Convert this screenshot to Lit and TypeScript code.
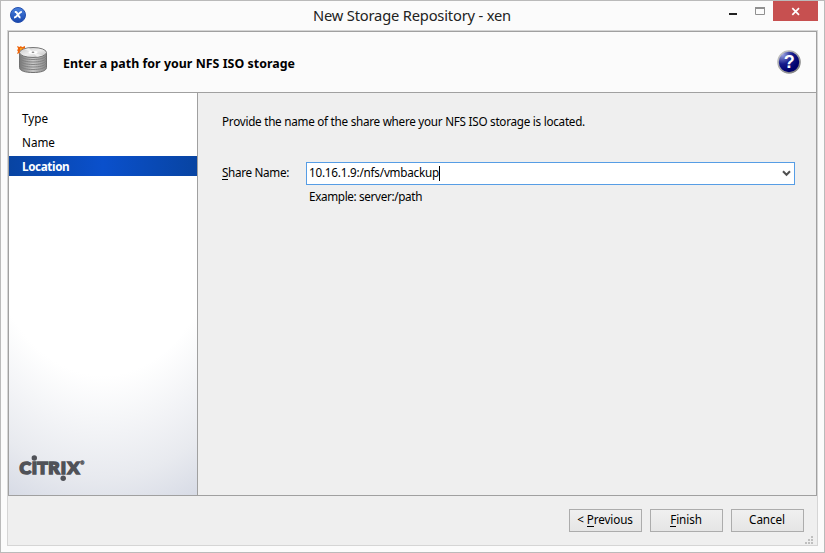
import { LitElement, html, css, svg } from "lit";
import { customElement, property } from "lit/decorators.js";

@customElement("disk-icon")
class DiskIcon extends LitElement {
  static styles = css`:host { display: block; width: 32px; height: 32px; } svg { display: block; }`;
  render() {
    const rings = [11.5, 14, 16.5, 19, 21.5];
    return html`<svg width="32" height="32" viewBox="0 0 32 32">
      <defs>
        <linearGradient id="side"><stop offset="0" stop-color="#777"/><stop offset=".3" stop-color="#aaa"/><stop offset=".5" stop-color="#c9c9c9"/><stop offset="1" stop-color="#888"/></linearGradient>
        <linearGradient id="top" x1="0" y1="0" x2="1" y2="1"><stop offset="0" stop-color="#c4c4c4"/><stop offset=".5" stop-color="#eee"/><stop offset="1" stop-color="#bbb"/></linearGradient>
      </defs>
      <path d="M2.5 7v14.5c0 3.5 6 5 13.5 5s13.5-1.5 13.5-5V7z" fill="url(#side)" stroke="#707070"/>
      ${rings.map((y) => svg`<path d=${`M3 ${y - 2}c1 3 7 4 13 4s12-1 13-4`} fill="none" stroke="#7d7d7d" stroke-width=".9"/>`)}
      <ellipse cx="16" cy="6.5" rx="13.5" ry="5" fill="url(#top)" stroke="#777"/>
      <path d="M16 6.5l-9-3.3 5-1.2zM16 6.5l10 3-6 1.5z" fill="#fff" opacity=".6"/>
      <ellipse cx="16" cy="6.3" rx="4.5" ry="1.5" fill="#fff"/>
      <ellipse cx="16" cy="6.3" rx="1.4" ry=".7" fill="#888"/>
      <path d="M0 0l2.5 1L4 0l1 1.2L8 0v2L6 3 3 4.5 2.5 7 0 8l1-2.5L0 4l1.2-1z" fill="#ee6408"/>
      <path d="M3 2h3L3 4.5z" fill="#f4a51c"/>
    </svg>`;
  }
}

@customElement("citrix-logo")
class CitrixLogo extends LitElement {
  static styles = css`
    :host { display: block; width: 68px; height: 28px; }
    svg { display: block; }
    text { font-family: Lato, sans-serif; font-weight: 900; font-size: 17.5px; fill: #505258; stroke: #505258; stroke-width: 1.6px; }
    .reg { font-size: 5px; stroke-width: 0.3px; }`;
  render() {
    return html`<svg width="68" height="28" viewBox="0 0 68 28">
      <text y="19.2" x="1.4 13.8 19.3 30.3 42.7 49.4">CITRIX</text>
      <text class="reg" x="62.3" y="9.7">®</text>
      <circle cx="16.3" cy="3" r="2.7" fill="#505258"/>
      <circle cx="45.2" cy="23.2" r="2.7" fill="#505258"/>
    </svg>`;
  }
}

@customElement("title-bar")
class TitleBar extends LitElement {
  @property() heading = "";
  static styles = css`
    :host { display: grid; grid-template-columns: 38px 1fr 102px; height: 29px; align-items: start; }
    svg { display: block; }
    .app { margin: 6px 0 0 9px; }
    .heading { text-align: center; font-size: 14.7px; line-height: 29px; color: #222; padding-left: 63px; white-space: nowrap; letter-spacing: -0.18px; }
    .controls { display: flex; }
    .close { width: 45px; height: 20px; background: #c75050; }`;
  render() {
    return html`
      <svg class="app" width="16" height="16" viewBox="0 0 16 16">
        <defs><linearGradient id="b" x2="0" y2="1"><stop offset="0" stop-color="#4b83df"/><stop offset="1" stop-color="#1745ac"/></linearGradient></defs>
        <circle cx="8" cy="8" r="7.5" fill="url(#b)" stroke="#244fae"/>
        <path d="M4.8 5h1.4c1 0 2.2 5.6 4.3 5.6M11.8 5h-.7C9.5 5 6.5 10.6 4 10.6" fill="none" stroke="#fff" stroke-width="2"/>
      </svg>
      <div class="heading">${this.heading}</div>
      <div class="controls">
        <svg width="51" height="20" viewBox="0 0 51 20">
          <path d="M7 12h8v2H7z" fill="#222"/>
          <path d="M33.5 7.5h9v6h-9z" fill="none" stroke="#909090"/><path d="M33 6h10v2H33z" fill="#909090"/>
        </svg>
        <div class="close"><svg width="45" height="20" viewBox="0 0 45 20"><path d="M19.3 7.2l6.7 6.6M26 7.2l-6.7 6.6" stroke="#fff" stroke-width="1.7"/></svg></div>
      </div>`;
  }
}

@customElement("app-root")
class AppRoot extends LitElement {
  static styles = css`
    :host { display: block; width: 825px; height: 553px; font-family: "Noto Sans", sans-serif; font-size: 11.7px; letter-spacing: -0.26px; color: #000; }
    * { box-sizing: border-box; }
    svg { display: block; }
    .window { display: flex; flex-direction: column; height: 100%; border: 1px solid #bababa; background: #fbfbfb; }
    .client { width: 811px; height: 516px; margin-left: 6px; border: 1px solid #d5d5d5; background: #efefef; display: flex; flex-direction: column; }
    .main { height: 465px; border: 1px solid #a0a0a0; display: flex; flex-direction: column; }
    .header { height: 61px; flex: none; display: flex; align-items: center; border-bottom: 1px solid #a0a0a0; background: #fbfbfb; padding: 0 15px 0 8px; }
    .header h1 { margin: 3px 0 0 14px; flex: 1; font-size: 12.4px; line-height: 18px; font-weight: 700; white-space: nowrap; letter-spacing: 0.03px; }
    .body { flex: 1; display: flex; }
    .side { width: 189px; border-right: 1px solid #a0a0a0; display: flex; flex-direction: column; justify-content: space-between;
      background: radial-gradient(ellipse 225px 325px at 94px 107px, #fff 54%, #e8eaef 85%, #d6dae5 101%); }
    .steps { margin: 15px 0 0; padding: 0; list-style: none; display: flex; flex-direction: column; gap: 4px; letter-spacing: 0; }
    .steps li { height: 20px; line-height: 21px; padding-left: 13px; }
    .steps .active { color: #fff; font-weight: 700; letter-spacing: -0.38px; background: linear-gradient(90deg, #0844a2, #0a50cc 50%, #0844a2); }
    citrix-logo { margin: 0 0 12px 9px; }
    .form { flex: 1; padding: 19px 21px 0 24px; white-space: nowrap; }
    .intro { line-height: 18px; }
    .row { display: flex; align-items: center; margin-top: 32px; }
    .label { width: 84px; margin-top: -3px; letter-spacing: -0.32px; }
    .combo { width: 489px; height: 23px; border: 1px solid #569de5; background: #fff; display: flex; align-items: center; padding-left: 2px; }
    .value { margin-top: -3px; letter-spacing: -0.22px; }
    .caret { width: 1px; height: 15px; background: #000; margin-top: -1px; }
    .arrow { margin-left: auto; margin-right: 3px; }
    .hint { margin: 2px 0 0 87px; line-height: 18px; letter-spacing: -0.34px; }
    u { text-decoration: none; border-bottom: 1px solid currentColor; display: inline-block; line-height: 13px; }
    .footer { flex: 1; display: flex; padding: 13px 1px 1px 561px; gap: 8px; }
    button { flex: none; width: 73px; height: 23px; padding: 0 1px 2px 0; border: 1px solid #acacac; background: linear-gradient(#f0f0f0, #e5e5e5); font: inherit; letter-spacing: -0.1px; color: #000; line-height: 19px; white-space: nowrap; }
    .grip { margin: auto 0 0 -7px; }
    .q { font: 700 18px "Liberation Sans", sans-serif; fill: #fff; }
  `;
  steps = ["Type", "Name", "Location"];
  render() {
    return html`<div class="window">
      <title-bar heading="New Storage Repository - xen"></title-bar>
      <div class="client">
        <div class="main">
          <div class="header">
            <disk-icon></disk-icon>
            <h1>Enter a path for your NFS ISO storage</h1>
            <svg width="24" height="24" viewBox="0 0 24 24">
              <defs>
                <radialGradient id="h" cx=".2" cy=".15" r=".8"><stop offset="0" stop-color="#a0a8e4"/><stop offset=".55" stop-color="#161c8c"/><stop offset="1" stop-color="#00006c"/></radialGradient>
                <linearGradient id="r" x2="1" y2="1"><stop offset="0" stop-color="#ccc"/><stop offset="1" stop-color="#777"/></linearGradient>
              </defs>
              <circle cx="12" cy="12" r="11" fill="url(#h)" stroke="url(#r)" stroke-width="1.6"/>
              <text class="q" x="12" y="18.2" text-anchor="middle">?</text>
            </svg>
          </div>
          <div class="body">
            <div class="side">
              <ul class="steps">${this.steps.map((s) => html`<li class=${s === "Location" ? "active" : ""}>${s}</li>`)}</ul>
              <citrix-logo></citrix-logo>
            </div>
            <div class="form">
              <div class="intro">Provide the name of the share where your NFS ISO storage is located.</div>
              <div class="row">
                <div class="label"><u>S</u>hare Name:</div>
                <div class="combo"><span class="value">10.16.1.9:/nfs/vmbackup</span><span class="caret"></span>
                  <svg class="arrow" width="9" height="7" viewBox="0 0 9 7"><path d="M1 1.2l3.5 3.6L8 1.2" fill="none" stroke="#505050" stroke-width="2"/></svg>
                </div>
              </div>
              <div class="hint">Example: server:/path</div>
            </div>
          </div>
        </div>
        <div class="footer">
          <button>&lt; <u>P</u>revious</button><button><u>F</u>inish</button><button>Cancel</button>
          <svg class="grip" width="8" height="8" viewBox="0 0 8 8" fill="#bfbfbf"><path d="M6 0h2v2H6zM3 3h2v2H3zM6 3h2v2H6zM0 6h2v2H0zM3 6h2v2H3zM6 6h2v2H6z"/></svg>
        </div>
      </div>
    </div>`;
  }
}
